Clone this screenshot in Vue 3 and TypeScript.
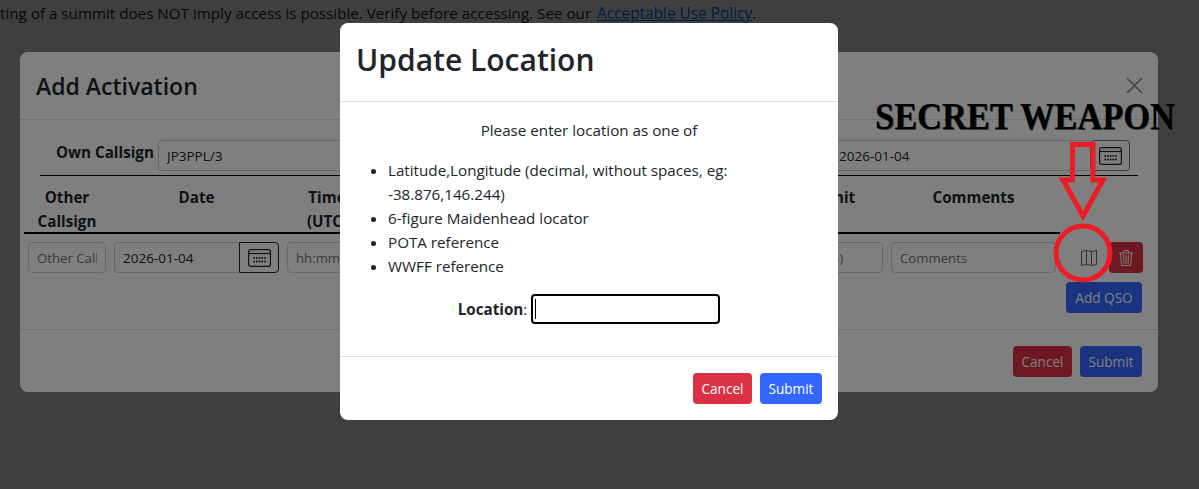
<script setup lang="ts">
const formats: string[] = [
  'Latitude,Longitude (decimal, without spaces, eg: -38.876,146.244)',
  '6-figure Maidenhead locator',
  'POTA reference',
  'WWFF reference',
]
</script>

<template>
  <div class="page">
    <p class="notice">
      Listing of a summit does NOT imply access is possible. Verify before accessing. See our
      <a href="#" class="link">Acceptable Use Policy</a>.
    </p>

    <div class="backdrop"></div>

    <section class="modal activation">
      <header class="a-head">
        <h2>Add Activation</h2>
        <svg class="close" viewBox="0 0 18 18"><path d="M1 1 17 17M17 1 1 17" /></svg>
      </header>
      <div class="a-body">
        <div class="own">
          <label class="own-label">Own Callsign</label>
          <input class="ctl own-call" value="JP3PPL/3" />
          <div class="date-group own-date">
            <input class="ctl" value="2026-01-04" />
            <button class="cal-btn">
              <svg viewBox="0 0 23 18" class="cal"><rect x=".6" y=".6" width="21.8" height="16.8" rx="2" /><path d="M.6 4.5h21.8" /><g class="dots"><circle v-for="n in 5" :key="'a' + n" :cx="3.5 + n * 2.7" cy="9" r="1" /><circle v-for="n in 5" :key="'b' + n" :cx="3.5 + n * 2.7" cy="12.6" r="1" /></g></svg>
            </button>
          </div>
        </div>
        <div class="grid heads">
          <div>Other Callsign</div>
          <div>Date</div>
          <div>Time (UTC)</div>
          <div></div>
          <div></div>
          <div>Summit</div>
          <div>Comments</div>
        </div>
        <div class="grid qso">
          <input class="ctl" placeholder="Other Callsign" />
          <div class="date-group">
            <input class="ctl" value="2026-01-04" />
            <button class="cal-btn">
              <svg viewBox="0 0 23 18" class="cal"><rect x=".6" y=".6" width="21.8" height="16.8" rx="2" /><path d="M.6 4.5h21.8" /><g class="dots"><circle v-for="n in 5" :key="'c' + n" :cx="3.5 + n * 2.7" cy="9" r="1" /><circle v-for="n in 5" :key="'d' + n" :cx="3.5 + n * 2.7" cy="12.6" r="1" /></g></svg>
            </button>
          </div>
          <input class="ctl" placeholder="hh:mm" />
          <input class="ctl" />
          <input class="ctl" />
          <input class="ctl" placeholder="Summit (S)" />
          <input class="ctl" placeholder="Comments" />
          <div class="actions">
            <svg class="map" viewBox="0 0 16 16"><path fill-rule="evenodd" d="M15.817.113A.5.5 0 0 1 16 .5v14a.5.5 0 0 1-.402.49l-5 1a.502.502 0 0 1-.196 0L5.5 15.01l-4.902.98A.5.5 0 0 1 0 15.5v-14a.5.5 0 0 1 .402-.49l5-1a.5.5 0 0 1 .196 0L10.5.99l4.902-.98a.5.5 0 0 1 .415.103zM10 1.91l-4-.8v12.98l4 .8V1.91zm1 12.98 4-.8V1.11l-4 .8v12.98zm-6-.8V1.11l-4 .8v12.98l4-.8z" /></svg>
            <button class="btn danger trash">
              <svg viewBox="0 0 16 16"><path d="M6.5 1h3a.5.5 0 0 1 .5.5v1H6v-1a.5.5 0 0 1 .5-.5ZM11 2.5v-1A1.5 1.5 0 0 0 9.5 0h-3A1.5 1.5 0 0 0 5 1.5v1H2.506a.58.58 0 0 0-.01 0H1.5a.5.5 0 0 0 0 1h.538l.853 10.66A2 2 0 0 0 4.885 16h6.23a2 2 0 0 0 1.994-1.84l.853-10.66h.538a.5.5 0 0 0 0-1h-.995a.59.59 0 0 0-.01 0H11Zm1.958 1-.846 10.58a1 1 0 0 1-.997.92h-6.23a1 1 0 0 1-.997-.92L3.042 3.5h9.916Zm-7.487 1a.5.5 0 0 1 .528.47l.5 8.5a.5.5 0 0 1-.998.06L5 5.03a.5.5 0 0 1 .47-.53Zm5.058 0a.5.5 0 0 1 .47.53l-.5 8.5a.5.5 0 1 1-.998-.06l.5-8.5a.5.5 0 0 1 .528-.47ZM8 4.5a.5.5 0 0 1 .5.5v8.5a.5.5 0 0 1-1 0V5a.5.5 0 0 1 .5-.5Z" /></svg>
            </button>
          </div>
        </div>
        <div class="add-row"><button class="btn primary">Add QSO</button></div>
      </div>
      <footer class="foot a-foot">
        <button class="btn danger">Cancel</button>
        <button class="btn primary">Submit</button>
      </footer>
    </section>

    <div class="backdrop"></div>

    <section class="modal location">
      <header class="l-head"><h1>Update Location</h1></header>
      <div class="l-body">
        <p class="intro">Please enter location as one of</p>
        <ul>
          <li v-for="f in formats" :key="f">{{ f }}</li>
        </ul>
        <div class="loc-row">
          <label><b>Location</b>:</label>
          <div class="fake-input"><span class="caret"></span></div>
        </div>
      </div>
      <footer class="foot l-foot">
        <button class="btn danger">Cancel</button>
        <button class="btn primary">Submit</button>
      </footer>
    </section>

    <div class="secret">SECRET WEAPON</div>
    <svg class="annot" viewBox="0 0 1199 489">
      <path d="M1072.5 144.5H1093V180H1103L1083 216L1063 180H1072.5Z" />
      <circle cx="1083" cy="253" r="27" />
    </svg>
  </div>
</template>

<style>
html, body { margin: 0; background: #fff; overflow: hidden; }
</style>

<style scoped>
.page {
  position: relative;
  width: 1199px;
  height: 489px;
  overflow: hidden;
  background: #fff;
  color: #212529;
  font-family: "Open Sans", "Noto Sans", sans-serif;
  font-size: 15.2px;
  line-height: 24px;
}
.notice { margin: 0; position: absolute; left: -19px; top: 1px; white-space: nowrap; font-size: 15.2px; }
.link { color: #0d6efd; font-size: 15.4px; margin-left: 2px; }
.backdrop { position: absolute; inset: 0; background: rgba(0, 0, 0, .5); }
.modal { position: absolute; background: #fff; border-radius: 8px; display: flex; flex-direction: column; box-sizing: border-box; }

.activation { left: 20px; top: 52px; width: 1138px; height: 340px; }
.a-head { height: 67px; border-bottom: 1px solid #dee2e6; display: flex; align-items: center; justify-content: space-between; padding: 0 16px; flex: none; }
.a-head h2 { margin: 0; font-size: 23px; font-weight: 600; line-height: 1.2; position: relative; top: 1px; }
.close { width: 17px; height: 17px; opacity: .55; margin: -1px -1px 0 0; }
.close path { stroke: #212529; stroke-width: 1.6; fill: none; }
.a-body { flex: 1; padding: 20px 4px 0; display: flex; flex-direction: column; }
.own { display: flex; align-items: flex-start; margin: 0 16px; padding-bottom: 4px; border-bottom: 1px solid #000; height: 31px; box-sizing: content-box; }
.own-label { margin-left: 16px; width: 102px; flex: none; font-weight: 700; }
.own-call { flex: 1; height: 31px; }
.own-date { width: 300px; flex: none; margin-left: 8px; margin-right: 8px; }
.ctl { box-sizing: border-box; height: 31px; min-width: 0; width: 100%; border: 1px solid #ced4da; border-radius: 4px; padding: 0 8px; background: #fff; font: inherit; font-size: 13.5px; color: #212529; outline: none; }
.ctl::placeholder { color: #6c757d; font-size: 13.2px; }
.date-group { display: flex; }
.date-group .ctl { flex: 1; border-radius: 4px 0 0 4px; border-right: 0; }
.cal-btn { flex: none; width: 40px; height: 31px; box-sizing: border-box; border: 1px solid #212529; border-radius: 0 4px 4px 0; background: #fff; padding: 0; display: flex; align-items: center; justify-content: center; }
.own-date .cal-btn { border-color: #6c757d; border-radius: 4px; }
.cal { width: 23px; height: 18px; fill: none; stroke: #212529; stroke-width: 1.2; }
.cal .dots { fill: #212529; stroke: none; }
.grid { display: grid; grid-template-columns: 86px 173px 88px 197px 196px 123px 173px 86px; }
.heads { margin-top: 9px; text-align: center; font-weight: 700; border-bottom: 2px solid #000; width: 1036px; box-sizing: border-box; height: 49px; }
.heads > div { padding: 0 8px; }
.qso { margin-top: 8px; }
.qso > .ctl, .qso > .date-group { margin: 0 4px; width: auto; }
.actions { display: flex; align-items: center; justify-content: flex-end; height: 31px; margin-right: 3px; }
.map { width: 16px; height: 16px; fill: #212529; fill-opacity: .7; margin-right: 12px; }
.btn { box-sizing: border-box; height: 31px; border: 0; border-radius: 4px; padding: 0 10px; color: #fff; font: inherit; font-size: 13.6px; display: inline-flex; align-items: center; justify-content: center; }
.danger { background: #dc3045; }
.primary { background: #3366ff; }
.trash { width: 34px; padding: 0; }
.trash svg { width: 16px; height: 16px; fill: #fff; }
.add-row { display: flex; justify-content: flex-end; margin: 9px 12px 0 0; }
.add-row .btn { width: 76px; padding: 0; }
.foot { display: flex; justify-content: flex-end; gap: 8px; padding: 16px; border-top: 1px solid #dee2e6; flex: none; }
.foot .btn:first-child { width: 59px; padding: 0; }
.foot .btn:last-child { width: 62px; padding: 0; }
.a-foot { height: 63px; box-sizing: border-box; }

.location { left: 340px; top: 23px; width: 498px; height: 397px; }
.l-head { height: 79px; box-sizing: border-box; border-bottom: 1px solid #dee2e6; padding: 0 17px; display: flex; align-items: center; flex: none; }
.l-head h1 { margin: 0; font-size: 30px; font-weight: 600; line-height: 1.2; position: relative; top: -2px; left: -1px; }
.l-body { flex: 1; padding: 16px 16px 0; }
.intro { margin: 0 0 16px; text-align: center; }
ul { margin: 0 0 16px; padding-left: 32px; }
.loc-row { display: flex; justify-content: center; align-items: center; gap: 4px; height: 30px; }
.fake-input { box-sizing: border-box; width: 189px; height: 30px; border: 2px solid #000; border-radius: 4px; display: flex; align-items: center; padding-left: 2px; }
.caret { width: 1px; height: 20px; background: #000; }
.l-foot { height: 64px; box-sizing: border-box; }

.secret { position: absolute; left: 875px; top: 94px; white-space: nowrap; font-family: "Liberation Serif", serif; font-weight: 700; font-size: 38px; line-height: 44px; color: #000; transform-origin: left center; transform: scaleX(.905); text-shadow: 1px 1px 0 rgba(0,0,0,.6); }
.annot { position: absolute; inset: 0; width: 1199px; height: 489px; fill: none; pointer-events: none; }
.annot path, .annot circle { stroke: #ed1c24; stroke-width: 5; }
</style>
